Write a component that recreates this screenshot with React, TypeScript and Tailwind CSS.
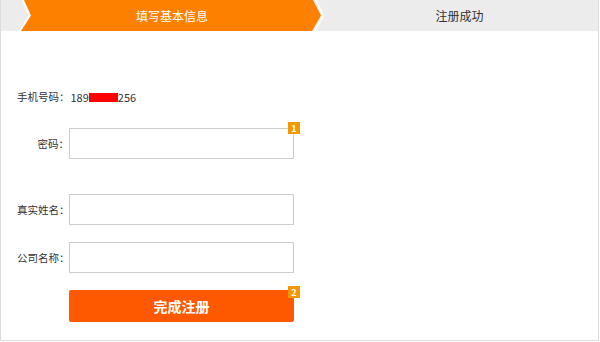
const font = "font-['Noto_Sans_CJK_SC','Noto_Sans',sans-serif]";

const Badge = ({ n, top }: { n: string; top: string }) => (
    <span
        className={`absolute ${top} right-[-6px] flex h-[12px] w-[12px] items-center justify-center bg-[#f39800] text-[9px] font-bold leading-none text-white`}
    >
        {n}
    </span>
);

const Field = ({ label, badge }: { label: string; badge?: string }) => (
    <div className="flex items-center">
        <label className="w-[52px] whitespace-nowrap text-right text-[10.5px] text-[#333]">{label}</label>
        <div className="relative">
            <input className="block h-[31px] w-[225px] border border-[#ccc] bg-white outline-none" />
            {badge && <Badge n={badge} top="top-[-6px]" />}
        </div>
    </div>
);

export default function App() {
    return (
        <div className={`h-[342px] w-[600px] bg-white ${font}`}>
            <div className="h-[341px] w-[599px] border border-t-0 border-[#dcdcdc]">
                <div className="relative h-[31px] bg-[#ececec]">
                    <svg className="absolute inset-0" width="599" height="31" viewBox="0 0 599 31">
                        <polygon points="23,0 312,0 320,15.5 311,31 20,31 30,15.5" fill="#fe8000" />
                        <polyline points="21,-1 28.5,15.5 18,32" fill="none" stroke="#fff" strokeWidth="1.6" />
                        <polyline points="314,-1 322.5,15.5 313,32" fill="none" stroke="#fff" strokeWidth="1.6" />
                    </svg>
                    <div className="relative flex h-full items-center text-[12px]">
                        <span className="ml-[22px] w-[298px] text-center text-white">填写基本信息</span>
                        <span className="flex-1 text-center text-[#333]">注册成功</span>
                    </div>
                </div>

                <div className="flex flex-col pl-[16px]">
                    <div className="mt-[58px] flex h-[16px] items-center text-[10.5px] text-[#333]">
                        <span>手机号码：</span>
                        <span className="ml-[1px] text-[11px]">189</span>
                        <span className="h-[9px] w-[29px] bg-[#ff0000]" />
                        <span className="text-[11px]">256</span>
                    </div>
                    <div className="mt-[23px]">
                        <Field label="密码：" badge="1" />
                    </div>
                    <div className="mt-[35px]">
                        <Field label="真实姓名：" />
                    </div>
                    <div className="mt-[17px]">
                        <Field label="公司名称：" />
                    </div>
                    <div className="ml-[52px] mt-[17px]">
                        <div className="relative w-[225px]">
                            <button className="flex h-[32px] w-full items-center justify-center rounded-[2px] bg-[#fe5900] text-[14px] font-bold text-white">
                                完成注册
                            </button>
                            <Badge n="2" top="top-[-4px]" />
                        </div>
                    </div>
                </div>
            </div>
        </div>
    );
}
